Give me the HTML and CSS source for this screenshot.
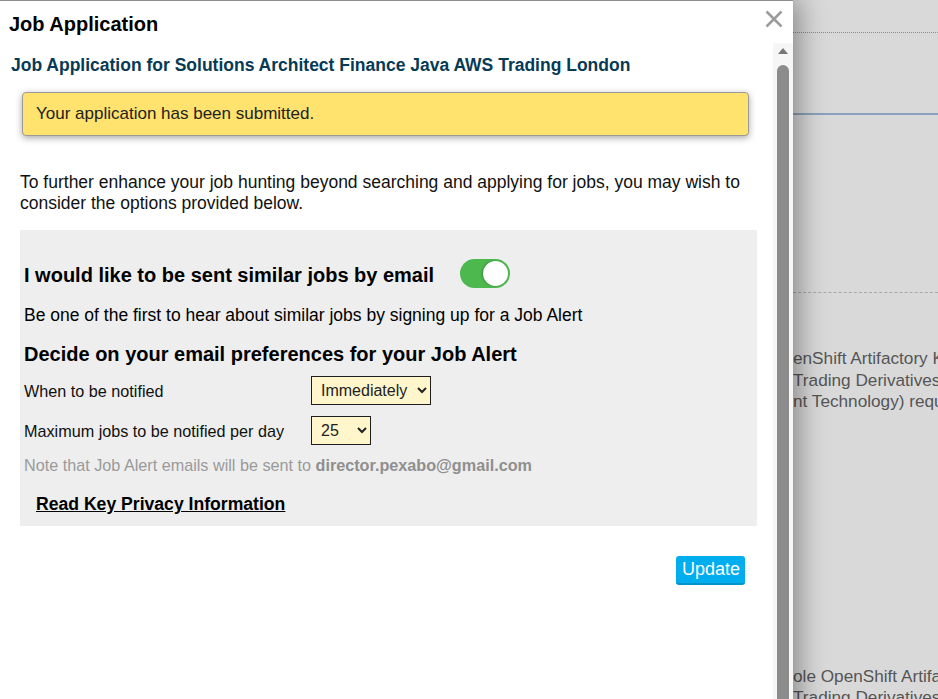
FILE: index.html
```html
<!DOCTYPE html>
<html lang="en">
<head>
<meta charset="utf-8">
<title>Job Application</title>
<link rel="stylesheet" href="styles.css">
</head>
<body>
<div class="page">
  <div class="page-col">
    <div class="rule-dotted"></div>
    <div class="rule-blue"></div>
    <div class="rule-dashed"></div>
    <p class="bg-text">enShift Artifactory K<br>Trading Derivatives<br>nt Technology) requ</p>
    <p class="bg-text bg-text-bottom">ole OpenShift Artifac<br>Trading Derivatives</p>
  </div>
</div>

<div class="dialog" role="dialog" aria-labelledby="dlg-title">
  <header class="dlg-head">
    <h1 class="dlg-title" id="dlg-title">Job Application</h1>
    <button class="dlg-close" type="button" aria-label="Close">
      <svg width="18" height="18" viewBox="0 0 18 18"><path d="M1.5 1.5L16.5 16.5M16.5 1.5L1.5 16.5" stroke="#9c9c9c" stroke-width="2.6" fill="none"/></svg>
    </button>
  </header>
  <div class="dlg-body">
    <div class="dlg-content">
      <h2 class="job-title">Job Application for Solutions Architect Finance Java AWS Trading London</h2>
      <div class="alert">Your application has been submitted.</div>
      <p class="intro">To further enhance your job hunting beyond searching and applying for jobs, you may wish to consider the options provided below.</p>
      <section class="panel">
        <div class="toggle-row">
          <h3 class="panel-heading row-heading">I would like to be sent similar jobs by email</h3>
          <span class="switch" role="switch" aria-checked="true"><span class="knob"></span></span>
        </div>
        <p class="panel-text">Be one of the first to hear about similar jobs by signing up for a Job Alert</p>
        <h3 class="panel-heading pref-title">Decide on your email preferences for your Job Alert</h3>
        <div class="form-grid">
          <label class="field-label" for="when">When to be notified</label>
          <select class="sel sel-wide" id="when">
            <option selected>Immediately</option>
            <option>Daily</option>
            <option>Weekly</option>
          </select>
          <label class="field-label" for="max">Maximum jobs to be notified per day</label>
          <select class="sel sel-narrow" id="max">
            <option>5</option>
            <option>10</option>
            <option>15</option>
            <option>20</option>
            <option selected>25</option>
          </select>
        </div>
        <p class="note">Note that Job Alert emails will be sent to <b>director.pexabo@gmail.com</b></p>
        <p class="privacy-row"><a class="privacy" href="#">Read Key Privacy Information</a></p>
      </section>
      <div class="actions"><button class="btn-update" type="button">Update</button></div>
    </div>
    <div class="scrollbar" aria-hidden="true">
      <span class="sb-up"></span>
      <span class="sb-thumb"></span>
    </div>
  </div>
</div>
</body>
</html>
```
FILE: styles.css
```css
html, body {
  margin: 0;
  padding: 0;
}
body {
  width: 938px;
  height: 699px;
  overflow: hidden;
  position: relative;
  background: #d9d9d9;
  font-family: "Liberation Sans", Arial, sans-serif;
  font-size: 16px;
  color: #111;
}

/* page behind the dialog */
.page {
  height: 699px;
}
.page-col {
  margin-left: 793px;
  overflow: hidden;
}
.rule-dotted {
  margin-top: 32px;
  border-top: 1px dotted #8a8a8a;
}
.rule-blue {
  margin-top: 80px;
  border-top: 2px solid #8aa2bb;
}
.rule-dashed {
  margin-top: 177px;
  border-top: 1px dashed #a8a8a8;
}
.bg-text {
  margin: 55px 0 0;
  white-space: nowrap;
  font-size: 17.2px;
  line-height: 21.5px;
  color: #555;
}
.bg-text-bottom {
  margin-top: 253px;
}

/* dialog */
.dialog {
  position: absolute;
  top: 0;
  left: 0;
  width: 793px;
  height: 760px;
  background: #fff;
  border-top: 1px solid #8c8c8c;
  box-shadow: 4px 0 26px 2px rgba(0, 0, 0, 0.38);
  display: flex;
  flex-direction: column;
  overflow: hidden;
}
.dlg-head {
  display: flex;
  justify-content: space-between;
  align-items: flex-start;
  height: 42px;
  box-sizing: border-box;
  padding: 9px 10px 0 9px;
}
.dlg-title {
  margin: 3px 0 0;
  font-size: 20px;
  line-height: 23px;
  font-weight: bold;
  color: #000;
}
.dlg-close {
  display: flex;
  padding: 0;
  margin: 0;
  border: 0;
  background: none;
  cursor: pointer;
}
.dlg-body {
  flex: 1;
  display: flex;
  min-height: 0;
}
.dlg-content {
  flex: 1;
  min-width: 0;
}
.scrollbar {
  width: 20px;
  box-sizing: border-box;
  padding-left: 4px;
  background: #f6f6f6;
  display: flex;
  flex-direction: column;
}
.sb-up {
  margin: 5px 0 0 1px;
  width: 0;
  height: 0;
  border-left: 5px solid transparent;
  border-right: 5px solid transparent;
  border-bottom: 6px solid #777;
}
.sb-thumb {
  margin-top: 11px;
  width: 12px;
  flex: 1;
  background: #8c8c8c;
  border-radius: 6px 6px 0 0;
}

.job-title {
  margin: 12px 0 0 11px;
  font-size: 17.5px;
  line-height: 20px;
  font-weight: bold;
  color: #073a55;
}
.alert {
  margin: 17px 0 0 22px;
  width: 727px;
  box-sizing: border-box;
  padding: 11px 13px;
  border: 1px solid #9a9a9a;
  border-radius: 4px;
  background: #ffe36e;
  box-shadow: 0 2px 7px rgba(0, 0, 0, 0.35);
  font-size: 17px;
  line-height: 20px;
  color: #222;
}
.intro {
  margin: 36px 0 0 20px;
  width: 737px;
  font-size: 17.5px;
  line-height: 21px;
  color: #111;
}
.panel {
  margin: 16px 0 0 20px;
  width: 737px;
  box-sizing: border-box;
  background: #eeeeee;
  padding: 29px 4px 10px;
  color: #000;
}
.toggle-row {
  display: flex;
  align-items: center;
  gap: 26px;
  height: 29px;
}
.panel-heading {
  margin: 0;
  font-size: 20px;
  line-height: 23px;
  font-weight: bold;
  color: #000;
}
.row-heading {
  margin-top: 3px;
}
.switch {
  width: 50px;
  height: 29px;
  box-sizing: border-box;
  padding: 0 2px;
  border-radius: 15px;
  background: #4db84e;
  display: flex;
  justify-content: flex-end;
  align-items: center;
}
.knob {
  width: 25px;
  height: 25px;
  border-radius: 50%;
  background: #fff;
  box-shadow: -1px 0 2px rgba(0, 0, 0, 0.25);
}
.panel-text {
  margin: 17px 0 0;
  font-size: 17.5px;
  line-height: 20px;
}
.pref-title {
  margin-top: 18px;
}
.form-grid {
  margin-top: 10px;
  display: grid;
  grid-template-columns: 287px auto;
  row-gap: 11px;
  align-items: center;
  justify-items: start;
}
.field-label {
  font-size: 16.2px;
  line-height: 20px;
  color: #111;
}
.sel {
  height: 29px;
  box-sizing: border-box;
  border: 1px solid #1e1e1e;
  border-radius: 0;
  background-color: #fff6cc;
  color: #222;
  font-family: "Liberation Sans", Arial, sans-serif;
  font-size: 16px;
  padding: 0 2px 0 5px;
  margin: 0;
}
.sel-wide {
  width: 120px;
}
.sel-narrow {
  width: 60px;
}
.note {
  margin: 10px 0 0;
  font-size: 16.2px;
  line-height: 20px;
  color: #9a9a9a;
}
.note b {
  color: #8f8f8f;
}
.privacy-row {
  margin: 18px 0 0 12px;
  line-height: 22px;
}
.privacy {
  font-size: 17.6px;
  font-weight: bold;
  color: #000;
  text-decoration: underline;
}
.actions {
  margin: 30px 0 0 20px;
  width: 725px;
  display: flex;
  justify-content: flex-end;
}
.btn-update {
  height: 29px;
  padding: 0 5px 0 6px;
  border: 0;
  border-bottom: 2px solid #0093cc;
  border-radius: 3px;
  background: #00adef;
  color: #fff;
  font-family: "Liberation Sans", Arial, sans-serif;
  font-size: 18px;
  line-height: 27px;
  cursor: pointer;
}
```
